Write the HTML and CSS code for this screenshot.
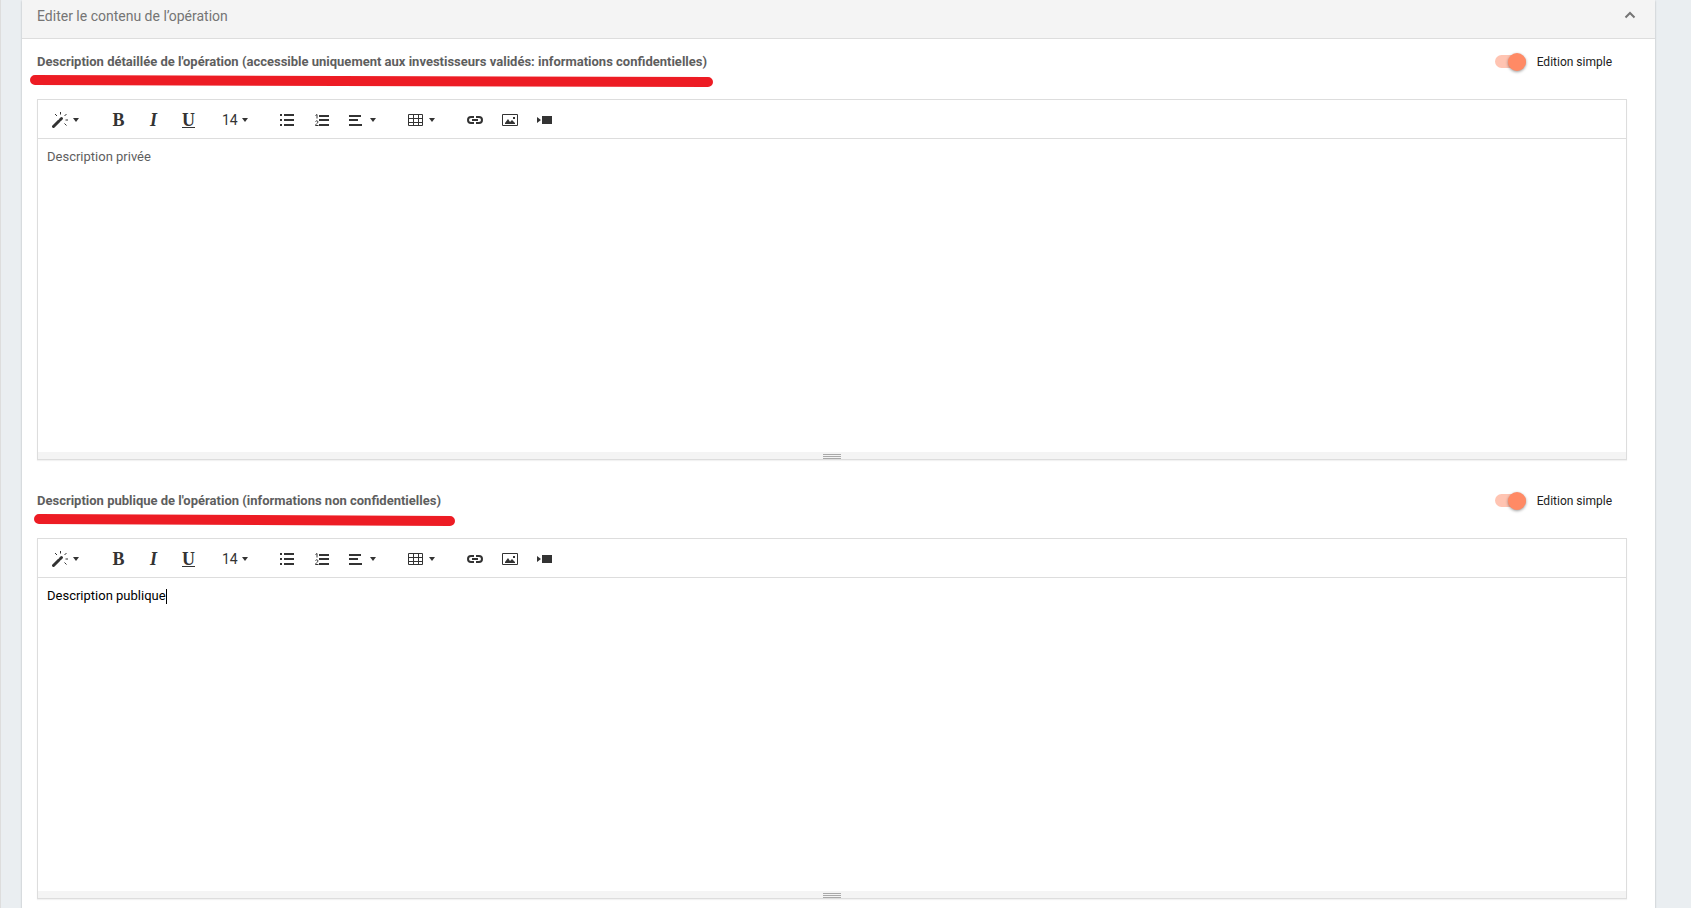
FILE: index.html
```html
<!DOCTYPE html>
<html lang="fr">

<head>
  <meta charset="UTF-8" />
  <meta name="viewport" content="width=device-width, initial-scale=1">
  <title>Editer l'opération</title>
  <link rel="stylesheet" href="styles.css">
</head>

<body>

  <!-- shared toolbar icons -->
  <svg class="sprite" aria-hidden="true">
    <symbol id="i-magic" viewBox="0 0 16 16">
      <path d="M1.500 14.500L7 9" stroke="currentColor" stroke-width="3" stroke-linecap="round" />
      <path d="M8.500 7.500L9.500 6.500" stroke="currentColor" stroke-width="3" stroke-linecap="round" />
      <path d="M8.500 0v2.500M3 2l2 2M14.500 2l-2 2M13.500 8H16M12.500 11.500l2 2" stroke="currentColor" stroke-width="1" />
    </symbol>
    <symbol id="i-ul" viewBox="0 0 14 12">
      <path d="M0 0h2v2H0zM0 5h2v2H0zM0 10h2v2H0zM4 0h10v2H4zM4 5h10v2H4zM4 10h10v2H4z" fill="currentColor" />
    </symbol>
    <symbol id="i-ol" viewBox="0 0 14 12">
      <path d="M4 1h10v2H4zM4 5h10v2H4zM4 10h10v2H4z" fill="currentColor" />
      <path d="M0.500 1.500L2 0.500v4M0.500 7.500c0.500-1 2.500-1 2.500 0.500c0 1-2.500 2-2.500 3.500h3" fill="none" stroke="currentColor" />
    </symbol>
    <symbol id="i-align" viewBox="0 0 14 12">
      <path d="M0 1h12v2H0zM0 5h9v2H0zM0 10h13v2H0z" fill="currentColor" />
    </symbol>
    <symbol id="i-table" viewBox="0 0 15 12">
      <path d="M0.500 0.500h14v11H0.500zM0 4.500h15M0 8.500h15M5.500 0v12M10.500 0v12" fill="none" stroke="currentColor" />
    </symbol>
    <symbol id="i-link" viewBox="0 0 16 8">
      <path d="M7 1H4a3 3 0 0 0 0 6h3M9 1h3a3 3 0 0 1 0 6H9M5 4h6" fill="none" stroke="currentColor" stroke-width="2" />
    </symbol>
    <symbol id="i-image" viewBox="0 0 16 12">
      <path d="M0.500 0.500h15v11H0.500z" fill="none" stroke="currentColor" />
      <path d="M3 10V9l3-4 2 3 2-2 3 3v1zM11 3h2v2h-2z" fill="currentColor" />
    </symbol>
    <symbol id="i-video" viewBox="0 0 15 8">
      <path d="M0 1l4 3-4 3zM5 0h10v8H5z" fill="currentColor" />
    </symbol>
  </svg>

  <div class="page">
    <div class="card">
      <button type="button" class="card-header" aria-expanded="true">
        <span>Editer le contenu de l’opération</span>
        <svg width="12" height="8" viewBox="0 0 12 8" aria-hidden="true">
          <path d="M1.500 6.500L6 2l4.500 4.500" fill="none" stroke="currentColor" stroke-width="2" />
        </svg>
      </button>

      <div class="card-body">
        <section class="field">
          <div class="field-head">
            <label class="field-label" for="private-desc">Description détaillée de l'opération (accessible uniquement aux investisseurs validés: informations confidentielles)</label>
            <svg class="mark mark-private" viewBox="0 0 683 14" aria-hidden="true">
              <path d="M5 6L678 8" stroke-width="10" stroke-linecap="round" />
            </svg>
            <label class="switch">
              <input type="checkbox" checked>
              <span>Edition simple</span>
            </label>
          </div>
          <div class="editor">
            <div class="toolbar">
              <div class="group">
                <button type="button" class="drop" aria-label="Style"><svg width="16" height="16"><use href="#i-magic" /></svg><i class="caret"></i></button>
              </div>
              <div class="group">
                <button type="button" class="letter"><b>B</b></button>
                <button type="button" class="letter"><em>I</em></button>
                <button type="button" class="letter"><u>U</u></button>
              </div>
              <div class="group">
                <button type="button" class="size">14<i class="caret"></i></button>
              </div>
              <div class="group">
                <button type="button" aria-label="Liste"><svg width="14" height="12"><use href="#i-ul" /></svg></button>
                <button type="button" aria-label="Liste ordonnée"><svg width="14" height="12"><use href="#i-ol" /></svg></button>
                <button type="button" class="drop" aria-label="Paragraphe"><svg width="14" height="12"><use href="#i-align" /></svg><i class="caret"></i></button>
              </div>
              <div class="group">
                <button type="button" class="drop" aria-label="Tableau"><svg width="15" height="12"><use href="#i-table" /></svg><i class="caret"></i></button>
              </div>
              <div class="group">
                <button type="button" aria-label="Lien"><svg width="16" height="8"><use href="#i-link" /></svg></button>
                <button type="button" aria-label="Image"><svg width="16" height="12"><use href="#i-image" /></svg></button>
                <button type="button" aria-label="Vidéo"><svg width="15" height="8"><use href="#i-video" /></svg></button>
              </div>
            </div>
            <div class="editing">
              <textarea id="private-desc" spellcheck="false">Description privée</textarea>
            </div>
            <div class="resizebar"><span></span><span></span><span></span></div>
          </div>
        </section>

        <section class="field">
          <div class="field-head">
            <label class="field-label" for="public-desc">Description publique de l'opération (informations non confidentielles)</label>
            <svg class="mark mark-public" viewBox="0 0 421 14" aria-hidden="true">
              <path d="M5 6L416 8" stroke-width="10" stroke-linecap="round" />
            </svg>
            <label class="switch">
              <input type="checkbox" checked>
              <span>Edition simple</span>
            </label>
          </div>
          <div class="editor">
            <div class="toolbar">
              <div class="group">
                <button type="button" class="drop" aria-label="Style"><svg width="16" height="16"><use href="#i-magic" /></svg><i class="caret"></i></button>
              </div>
              <div class="group">
                <button type="button" class="letter"><b>B</b></button>
                <button type="button" class="letter"><em>I</em></button>
                <button type="button" class="letter"><u>U</u></button>
              </div>
              <div class="group">
                <button type="button" class="size">14<i class="caret"></i></button>
              </div>
              <div class="group">
                <button type="button" aria-label="Liste"><svg width="14" height="12"><use href="#i-ul" /></svg></button>
                <button type="button" aria-label="Liste ordonnée"><svg width="14" height="12"><use href="#i-ol" /></svg></button>
                <button type="button" class="drop" aria-label="Paragraphe"><svg width="14" height="12"><use href="#i-align" /></svg><i class="caret"></i></button>
              </div>
              <div class="group">
                <button type="button" class="drop" aria-label="Tableau"><svg width="15" height="12"><use href="#i-table" /></svg><i class="caret"></i></button>
              </div>
              <div class="group">
                <button type="button" aria-label="Lien"><svg width="16" height="8"><use href="#i-link" /></svg></button>
                <button type="button" aria-label="Image"><svg width="16" height="12"><use href="#i-image" /></svg></button>
                <button type="button" aria-label="Vidéo"><svg width="15" height="8"><use href="#i-video" /></svg></button>
              </div>
            </div>
            <div class="editing active">
              <textarea id="public-desc" spellcheck="false">Description publique</textarea>
              <span class="cursor"></span>
            </div>
            <div class="resizebar"><span></span><span></span><span></span></div>
          </div>
        </section>
      </div>
    </div>
  </div>

</body>

</html>
```
FILE: styles.css
```css
* {
  box-sizing: border-box;
}

body {
  margin: 0;
  font-family: Roboto, "Liberation Sans", sans-serif;
  font-size: 13px;
  line-height: 20px;
  color: #5e5e5e;
  background: #eaeef1;
}

button {
  border: 0;
  background: none;
  font-family: inherit;
  color: inherit;
  cursor: pointer;
}

.sprite {
  position: absolute;
  width: 0;
  height: 0;
}

.page {
  min-height: 100vh;
  padding: 0 36px 0 21px;
  border-left: 1px solid #dddddd;
}

.card {
  min-height: 100vh;
  background: #fff;
  box-shadow: 0 1px 2px rgba(0, 0, 0, 0.25);
}

.card-header {
  display: flex;
  justify-content: space-between;
  align-items: flex-start;
  width: 100%;
  padding: 6px 19px 12px 15px;
  border-bottom: 1px solid #dddddd;
  background: #f4f4f4;
  color: #757575;
  font-size: 14px;
  line-height: 20px;
}

.card-header svg {
  margin-top: 5px;
}

.card-body {
  display: flex;
  flex-direction: column;
  gap: 18px;
  padding: 0 28px 0 15px;
}

.field-head {
  position: relative;
  display: flex;
  justify-content: space-between;
  height: 60px;
  padding: 13px 15px 0 0;
}

.field-label {
  font-weight: bold;
}

/* red marker lines under the labels */
.mark {
  position: absolute;
  top: 35px;
  height: 14px;
  stroke: #ed1c24;
}

.mark-private {
  left: -7px;
  width: 683px;
}

.mark-public {
  left: -3px;
  width: 421px;
}

.switch {
  display: flex;
  gap: 11px;
  height: 20px;
  font-size: 12px;
  color: #212121;
  cursor: pointer;
}

.switch input {
  appearance: none;
  position: relative;
  width: 31px;
  height: 13px;
  margin: 3px 0 0;
  border-radius: 7px;
  background: #ffc4b2;
}

.switch input::before {
  content: "";
  position: absolute;
  top: -2px;
  right: 0;
  width: 18px;
  height: 18px;
  border-radius: 50%;
  background: #ff8a65;
  box-shadow: 0 1px 3px rgba(0, 0, 0, 0.4);
}

.switch input:not(:checked)::before {
  right: 13px;
}

.editor {
  border: 1px solid #dddddd;
  box-shadow: 0 1px 1px rgba(0, 0, 0, 0.05);
}

.toolbar {
  display: flex;
  gap: 11px;
  height: 39px;
  padding: 2px 4px 0;
  border-bottom: 1px solid #dddddd;
  color: #333;
}

.group {
  display: flex;
}

.group button {
  display: flex;
  align-items: center;
  justify-content: center;
  width: 35px;
  padding: 0;
}

.group .drop {
  justify-content: space-between;
  width: 48px;
  padding: 0 11px 0 10px;
}

.group .letter {
  font-family: "Liberation Serif", serif;
  font-size: 18px;
  font-weight: bold;
}

.group .size {
  justify-content: space-between;
  width: 41px;
  padding: 0 10px 0 5px;
  font-size: 14px;
}

.caret {
  border: 3px solid transparent;
  border-top: 4px solid #333;
  border-bottom: 0;
}

.editing {
  position: relative;
}

.editing textarea {
  display: block;
  width: 100%;
  height: 313px;
  padding: 8px 9px;
  border: 0;
  outline: 0;
  resize: none;
  background: #fff;
  font: inherit;
  color: #5e5e5e;
}

.active textarea {
  color: #000;
}

.cursor {
  position: absolute;
  top: 11px;
  left: 128px;
  width: 1px;
  height: 15px;
  background: #000;
}

.resizebar {
  display: flex;
  flex-direction: column;
  align-items: center;
  gap: 1px;
  height: 7px;
  padding-top: 2px;
  background: #f4f4f4;
  cursor: ns-resize;
}

.resizebar span {
  width: 18px;
  height: 1px;
  background: #a9a9a9;
}
```
